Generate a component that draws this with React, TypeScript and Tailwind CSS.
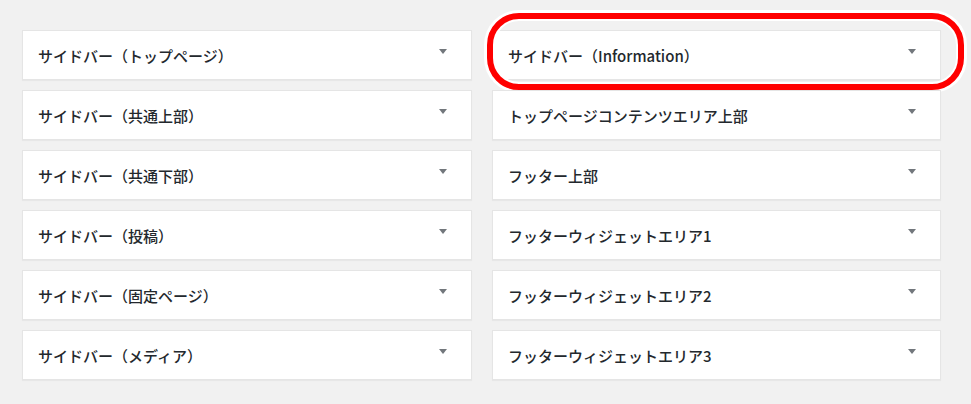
const leftAreas = [
  "サイドバー（トップページ）",
  "サイドバー（共通上部）",
  "サイドバー（共通下部）",
  "サイドバー（投稿）",
  "サイドバー（固定ページ）",
  "サイドバー（メディア）",
];

const rightAreas = [
  "サイドバー（Information）",
  "トップページコンテンツエリア上部",
  "フッター上部",
  "フッターウィジェットエリア1",
  "フッターウィジェットエリア2",
  "フッターウィジェットエリア3",
];

const Arrow = () => (
  <svg width="8" height="5" viewBox="0 0 8 5" className="absolute top-[18px] right-[24px]">
    <path d="M0 0 L8 0 L4 5 Z" fill="#72777c" />
  </svg>
);

const WidgetArea: React.FC<{ title: string; highlight?: boolean }> = ({ title, highlight }) => (
  <div className="relative h-[50px] bg-white border border-[#e5e5e5] shadow-[0_1px_1px_rgba(0,0,0,0.04)] flex items-center pl-[15px] pr-10">
    <h3 className="text-[15px] leading-none font-medium text-[#23282d] whitespace-nowrap">{title}</h3>
    <Arrow />
    {highlight && (
      <div className="absolute -left-[6px] -top-[18px] -right-[24px] -bottom-[11px] rounded-[32px] border-[6px] border-[#ff0000] shadow-[0_0_0_3px_#ffffff,inset_0_0_0_2px_#ffffff] pointer-events-none" />
    )}
  </div>
);

export default function App() {
  return (
    <div
      className="min-h-[404px] w-[971px] bg-[#f1f1f1] pt-[30px] pl-[22px]"
      style={{ fontFamily: '"Noto Sans CJK JP", "Noto Sans", sans-serif' }}
    >
      <div className="grid grid-cols-[450px_449px] gap-x-[20px]">
        <div className="flex flex-col gap-[10px]">
          {leftAreas.map((t) => (
            <WidgetArea key={t} title={t} />
          ))}
        </div>
        <div className="flex flex-col gap-[10px]">
          {rightAreas.map((t, i) => (
            <WidgetArea key={t} title={t} highlight={i === 0} />
          ))}
        </div>
      </div>
    </div>
  );
}
